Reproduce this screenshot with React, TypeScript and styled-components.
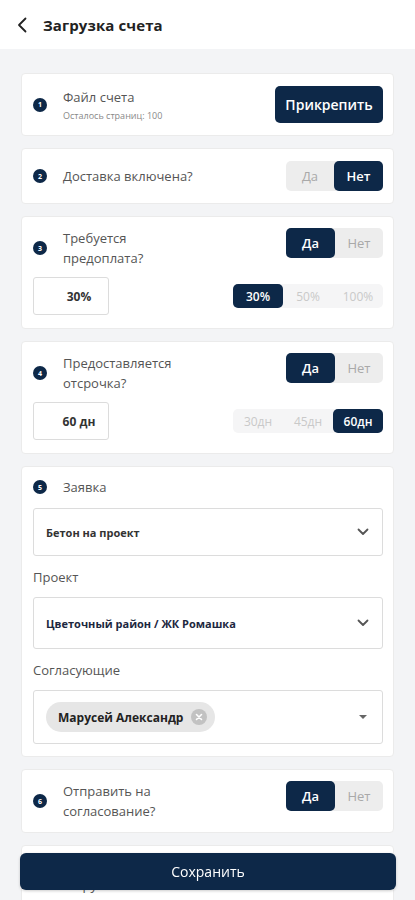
import styled, { createGlobalStyle } from "styled-components";

const NAVY = "#0d2848";

const GlobalStyle = createGlobalStyle`
  * {
    box-sizing: border-box;
  }

  body {
    margin: 0;
    background: #f3f4f6;
    font-family: "Open Sans", "Noto Sans", sans-serif;
    color: #333;
  }
`;

const Header = styled.header`
  height: 49px;
  background: #fff;
  display: flex;
  align-items: center;
  gap: 14px;
  padding: 0 0 0 15px;
`;

const BackButton = styled.button`
  border: none;
  background: none;
  padding: 0;
  width: 14px;
  height: 20px;
  display: flex;
  align-items: center;
  justify-content: center;
  color: #222;
`;

const Title = styled.h1`
  margin: 0;
  font-size: 15px;
  font-weight: 700;
  color: #222;
  letter-spacing: 0.1px;
`;

const Main = styled.main`
  display: flex;
  flex-direction: column;
  gap: 12px;
  padding: 24px 21px 80px;
`;

const Card = styled.section<{ $pad?: string }>`
  background: #fff;
  border: 1px solid #ebebeb;
  border-radius: 4px;
  padding: ${(p) => p.$pad || "12px 10px 12px 11px"};
  display: flex;
  flex-direction: column;
`;

const Row = styled.div<{ $align?: string }>`
  display: flex;
  align-items: ${(p) => p.$align || "center"};
  justify-content: space-between;
`;

const Question = styled.div`
  display: flex;
  align-items: center;
  gap: 16px;
  min-height: 20px;
`;

const StepBadge = styled.span`
  width: 14px;
  height: 14px;
  flex: none;
  border-radius: 50%;
  background: ${NAVY};
  color: #fff;
  font-size: 7px;
  font-weight: 700;
  display: flex;
  align-items: center;
  justify-content: center;
`;

const QuestionText = styled.div`
  font-size: 13px;
  line-height: 20px;
  color: #555;
`;

const Hint = styled.div`
  font-size: 9px;
  line-height: 14px;
  color: #888;
  margin-top: 2px;
`;

const PrimaryButton = styled.button`
  height: 37px;
  width: 108px;
  border: none;
  border-radius: 5px;
  background: ${NAVY};
  color: #fff;
  font-family: inherit;
  font-size: 14px;
  font-weight: 600;
`;

const Toggle = styled.div`
  display: flex;
  height: 30px;
  border-radius: 5px;
  background: #ededed;
`;

const ToggleOption = styled.button<{ $active?: boolean }>`
  width: ${(p) => (p.$active ? "49px" : "48px")};
  border: none;
  border-radius: 5px;
  font-family: inherit;
  font-size: 13px;
  font-weight: ${(p) => (p.$active ? 600 : 400)};
  background: ${(p) => (p.$active ? NAVY : "transparent")};
  color: ${(p) => (p.$active ? "#fff" : "#a9a9a9")};
  padding: 0;
`;

const ValueRow = styled.div`
  display: flex;
  align-items: center;
  justify-content: space-between;
  margin-top: 9px;
`;

const ValueBox = styled.div`
  width: 76px;
  height: 38px;
  border: 1px solid #dcdcdc;
  border-radius: 3px;
  display: flex;
  align-items: center;
  justify-content: center;
  padding-left: 16px;
  font-size: 12px;
  font-weight: 700;
  color: #333;
`;

const Segments = styled.div`
  display: flex;
  height: 24px;
  border-radius: 5px;
  background: #f5f5f6;
`;

const SegmentOption = styled.button<{ $active?: boolean }>`
  width: 50px;
  border: none;
  border-radius: 5px;
  padding: 0;
  font-family: inherit;
  font-size: 12px;
  font-weight: ${(p) => (p.$active ? 600 : 400)};
  background: ${(p) => (p.$active ? NAVY : "transparent")};
  color: ${(p) => (p.$active ? "#fff" : "#c9c9c9")};
`;

const CardHead = styled.div`
  margin-bottom: 11px;
`;

const FieldLabel = styled.div`
  font-size: 13px;
  line-height: 20px;
  color: #555;
  margin: 11px 0 10px;
`;

const Select = styled.div<{ $h: number }>`
  height: ${(p) => p.$h}px;
  border: 1px solid #dcdcdc;
  border-radius: 3px;
  display: flex;
  align-items: center;
  justify-content: space-between;
  padding: 0 13px 0 12px;
`;

const SelectValue = styled.span<{ $dark?: boolean }>`
  font-size: 11px;
  font-weight: 700;
  color: ${(p) => (p.$dark ? "#1d2740" : "#333")};
`;

const Chip = styled.span`
  display: inline-flex;
  align-items: center;
  gap: 8px;
  height: 30px;
  padding: 0 8px 0 12px;
  border-radius: 15px;
  background: #e6e6e6;
  font-size: 12px;
  font-weight: 700;
  color: #222;
`;

const ChipRemove = styled.span`
  width: 16px;
  height: 16px;
  border-radius: 50%;
  background: #c2c2c2;
  display: flex;
  align-items: center;
  justify-content: center;
`;

const Caret = styled.span`
  width: 0;
  height: 0;
  border-left: 4px solid transparent;
  border-right: 4px solid transparent;
  border-top: 4px solid #666;
  margin-right: 2px;
`;

const SaveButton = styled.button`
  position: fixed;
  left: 20px;
  right: 19px;
  bottom: 10px;
  height: 37px;
  border: none;
  border-radius: 6px;
  background: ${NAVY};
  color: #fff;
  font-family: inherit;
  font-size: 14px;
  font-weight: 500;
  box-shadow: 0 1px 3px rgba(0, 0, 0, 0.2);
`;

const Chevron = () => (
  <svg width="12" height="8" viewBox="0 0 12 8">
    <polyline points="1.5,1.5 6,6 10.5,1.5" fill="none" stroke="#555" strokeWidth="1.8" strokeLinecap="round" strokeLinejoin="round" />
  </svg>
);

const YesNo = ({ yes }: { yes: boolean }) => (
  <Toggle>
    <ToggleOption $active={yes}>Да</ToggleOption>
    <ToggleOption $active={!yes}>Нет</ToggleOption>
  </Toggle>
);

const Step = ({ n, lines }: { n: number; lines: string[] }) => (
  <Question>
    <StepBadge>{n}</StepBadge>
    <QuestionText>
      {lines.map((l) => (
        <div key={l}>{l}</div>
      ))}
    </QuestionText>
  </Question>
);

export default function App() {
  return (
    <>
      <GlobalStyle />
      <Header>
        <BackButton>
          <svg width="10" height="16" viewBox="0 0 10 16">
            <polyline points="8.5,1.5 2,8 8.5,14.5" fill="none" stroke="#222" strokeWidth="1.8" strokeLinecap="round" strokeLinejoin="round" />
          </svg>
        </BackButton>
        <Title>Загрузка счета</Title>
      </Header>

      <Main>
        <Card>
          <Row>
            <Question>
              <StepBadge>1</StepBadge>
              <div>
                <QuestionText>Файл счета</QuestionText>
                <Hint>Осталось страниц: 100</Hint>
              </div>
            </Question>
            <PrimaryButton>Прикрепить</PrimaryButton>
          </Row>
        </Card>

        <Card>
          <Row>
            <Step n={2} lines={["Доставка включена?"]} />
            <YesNo yes={false} />
          </Row>
        </Card>

        <Card $pad="11px 10px 13px 11px">
          <Row $align="flex-start">
            <Step n={3} lines={["Требуется", "предоплата?"]} />
            <YesNo yes />
          </Row>
          <ValueRow>
            <ValueBox>30%</ValueBox>
            <Segments>
              <SegmentOption $active>30%</SegmentOption>
              <SegmentOption>50%</SegmentOption>
              <SegmentOption>100%</SegmentOption>
            </Segments>
          </ValueRow>
        </Card>

        <Card $pad="11px 10px 13px 11px">
          <Row $align="flex-start">
            <Step n={4} lines={["Предоставляется", "отсрочка?"]} />
            <YesNo yes />
          </Row>
          <ValueRow>
            <ValueBox>60 дн</ValueBox>
            <Segments>
              <SegmentOption>30дн</SegmentOption>
              <SegmentOption>45дн</SegmentOption>
              <SegmentOption $active>60дн</SegmentOption>
            </Segments>
          </ValueRow>
        </Card>

        <Card $pad="10px 10px 12px 11px">
          <CardHead>
            <Step n={5} lines={["Заявка"]} />
          </CardHead>
          <Select $h={48}>
            <SelectValue>Бетон на проект</SelectValue>
            <Chevron />
          </Select>
          <FieldLabel>Проект</FieldLabel>
          <Select $h={52}>
            <SelectValue $dark>Цветочный район / ЖК Ромашка</SelectValue>
            <Chevron />
          </Select>
          <FieldLabel>Согласующие</FieldLabel>
          <Select $h={54}>
            <Chip>
              Марусей Александр
              <ChipRemove>
                <svg width="8" height="8" viewBox="0 0 8 8">
                  <path d="M1.5 1.5 L6.5 6.5 M6.5 1.5 L1.5 6.5" stroke="#fff" strokeWidth="1.6" strokeLinecap="round" />
                </svg>
              </ChipRemove>
            </Chip>
            <Caret />
          </Select>
        </Card>

        <Card $pad="11px 10px 11px 11px">
          <Row $align="flex-start">
            <Step n={6} lines={["Отправить на", "согласование?"]} />
            <YesNo yes />
          </Row>
        </Card>

        <Card $pad="9px 10px 11px 11px">
          <Row $align="flex-start">
            <Step n={7} lines={["Привязать к", "отгрузке?"]} />
            <YesNo yes={false} />
          </Row>
        </Card>
      </Main>

      <SaveButton>Сохранить</SaveButton>
    </>
  );
}
